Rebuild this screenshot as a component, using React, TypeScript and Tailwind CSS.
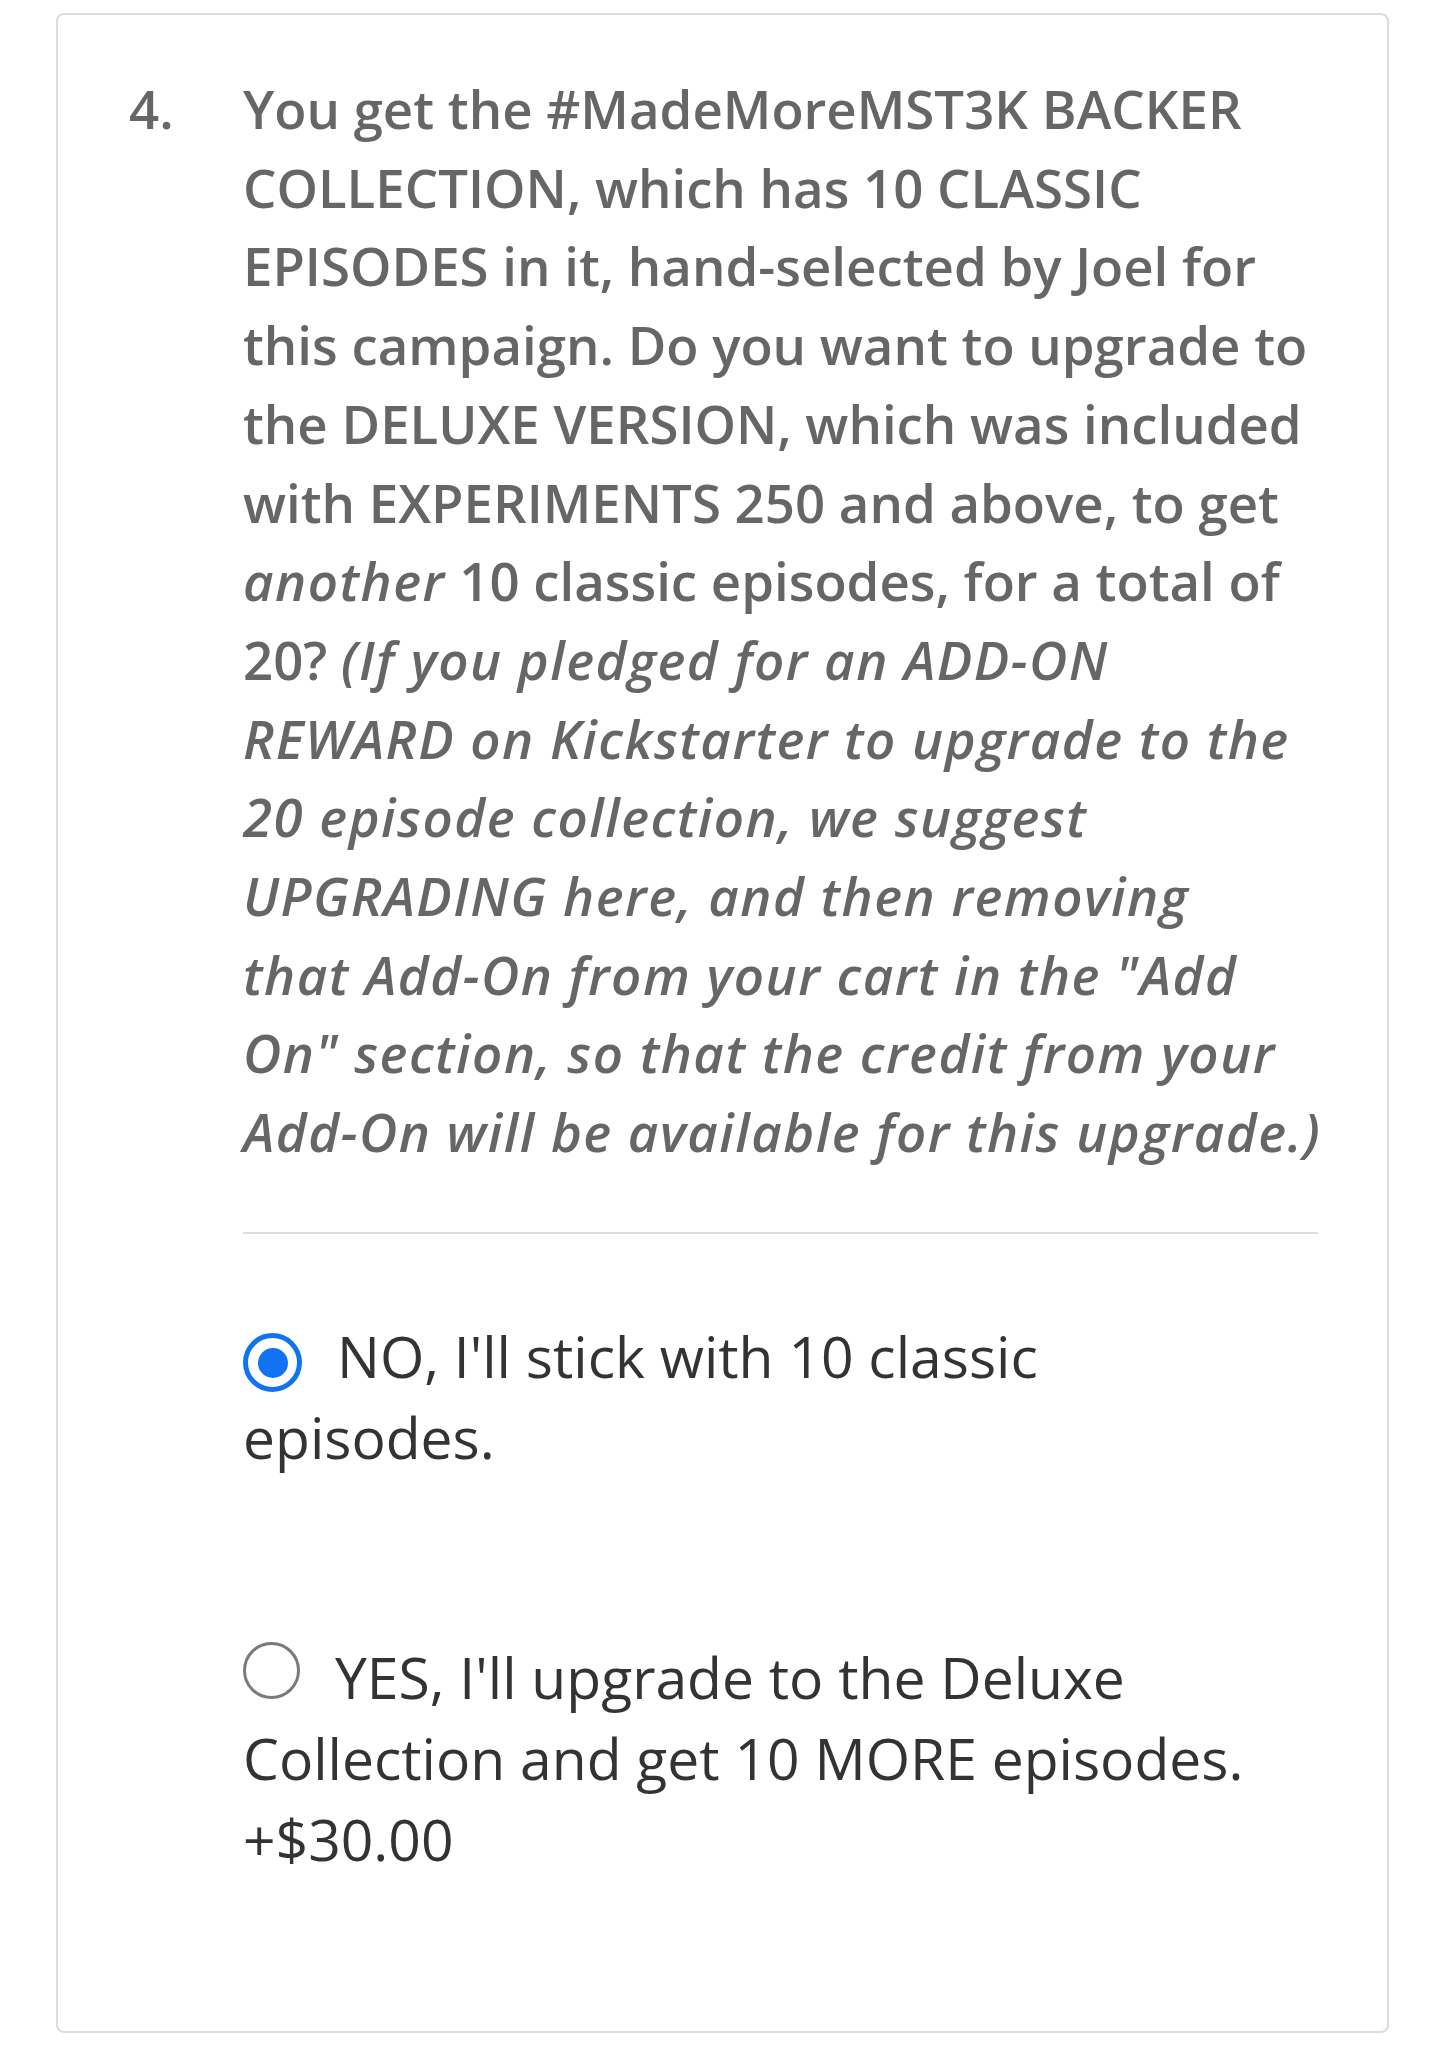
import React from "react";

export default function App() {
  return (
    <div className="min-h-[2048px] bg-white" style={{ fontFamily: '"Open Sans", "Liberation Sans", sans-serif' }}>
      <div className="ml-[56px] mt-[13px] w-[1333px] rounded-[8px] border-2 border-[#dcdcdc] pl-[71px] pr-[69px] pt-[55px] pb-[150px]">
        <div className="flex">
          <div className="w-[114px] shrink-0 text-[52.75px] leading-[78.7px] font-semibold text-[#666666]">4.</div>
          <div className="w-[1075px]">
            <p className="text-[52.75px] leading-[78.7px] font-semibold text-[#666666] whitespace-nowrap">
              You get the #MadeMoreMST3K BACKER<br />
              COLLECTION, which has 10 CLASSIC<br />
              EPISODES in it, hand-selected by Joel for<br />
              this campaign. Do you want to upgrade to<br />
              the DELUXE VERSION, which was included<br />
              with EXPERIMENTS 250 and above, to get<br />
              <em className="tracking-[1.5px]">another</em> 10 classic episodes, for a total of<br />
              20? <em className="tracking-[1.5px]">(If you pledged for an ADD-ON<br />
              REWARD on Kickstarter to upgrade to the<br />
              20 episode collection, we suggest<br />
              UPGRADING here, and then removing<br />
              that Add-On from your cart in the "Add<br />
              On" section, so that the credit from your<br />
              Add-On will be available for this upgrade.)</em>
            </p>
            <div className="mt-[60px] h-[2px] bg-[#dedede]" />
            <div className="mt-[82px] text-[57px] leading-[81.4px] text-[#333333]">
              <span className="mr-[35px] inline-flex h-[59px] w-[59px] items-center justify-center rounded-full border-[5px] border-[#1273f2] align-baseline">
                <span className="h-[30px] w-[30px] rounded-full bg-[#1273f2]" />
              </span>
              NO, I'll stick with 10 classic<br />
              episodes.
            </div>
            <div className="mt-[158px] text-[57px] leading-[81.4px] text-[#333333]">
              <span className="mr-[35px] inline-block h-[57px] w-[57px] rounded-full border-[3px] border-[#7a7a7a] align-baseline" />
              YES, I'll upgrade to the Deluxe<br />
              Collection and get 10 MORE episodes.<br />
              +$30.00
            </div>
          </div>
        </div>
      </div>
    </div>
  );
}
